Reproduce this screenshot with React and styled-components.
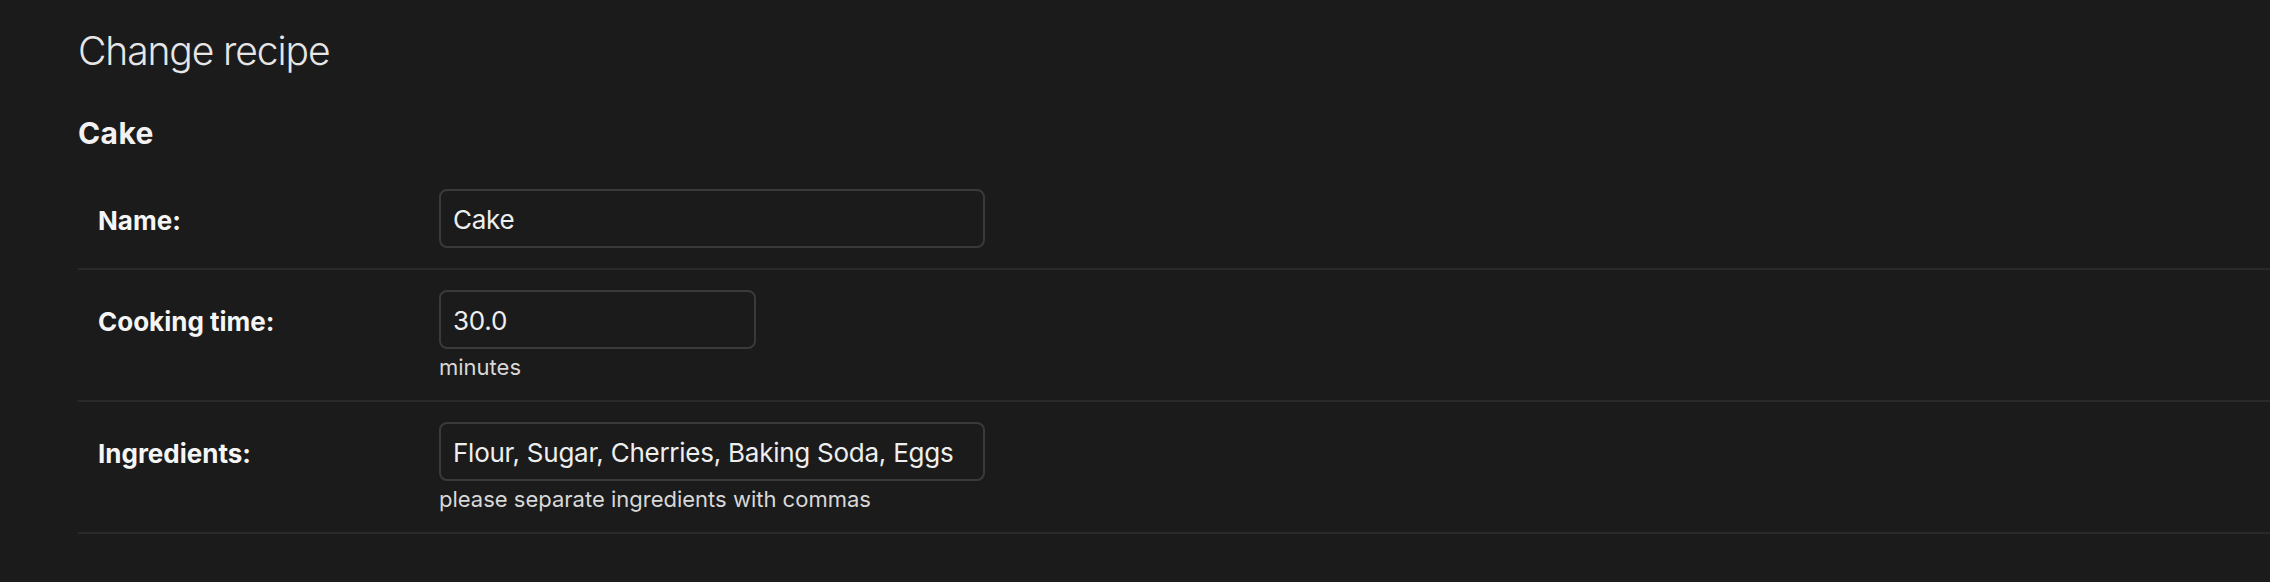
import React, { useState } from 'react';
import styled, { createGlobalStyle } from 'styled-components';

const GlobalStyle = createGlobalStyle`
  html, body {
    margin: 0;
    padding: 0;
    background: #1b1b1b;
  }
  body {
    font-family: Inter, 'Noto Sans', sans-serif;
    color: #eeeeee;
  }
`;

const Content = styled.div`
  padding: 27px 0 40px 78px;
`;

const Title = styled.h1`
  margin: 0;
  font-size: 39px;
  line-height: 48px;
  font-weight: 300;
  letter-spacing: -1.1px;
  color: #e6e6e6;
`;

const Subtitle = styled.h2`
  margin: 41px 0 18px;
  font-size: 30px;
  line-height: 35px;
  font-weight: 700;
  letter-spacing: 0.4px;
  color: #f2f2f2;
`;

const Fieldset = styled.fieldset`
  margin: 0;
  padding: 0;
  border: none;
`;

const Row = styled.div`
  display: flex;
  align-items: flex-start;
  padding: 20px 0 20px 20px;
  border-bottom: 2px solid #2a2a2a;
`;

const Label = styled.label`
  box-sizing: border-box;
  flex: 0 0 341px;
  height: 59px;
  padding-top: 3px;
  display: flex;
  align-items: center;
  font-size: 26px;
  font-weight: 700;
  color: #f5f5f5;
`;

const Field = styled.div`
  display: flex;
  flex-direction: column;
`;

const Input = styled.input`
  box-sizing: border-box;
  width: ${(p) => p.$width}px;
  height: 59px;
  padding: 2px 12px 0;
  border: 2px solid #3a3a3a;
  border-radius: 8px;
  background: #1b1b1b;
  color: #eeeeee;
  font-family: Inter, 'Noto Sans', sans-serif;
  font-size: 26px;
  letter-spacing: -0.25px;

  &:focus {
    outline: none;
    border-color: #5a5a5a;
  }
`;

const Help = styled.div`
  margin-top: 6px;
  font-size: 22px;
  line-height: 25px;
  color: #d8d8d8;
`;

export default function App() {
  const [name, setName] = useState('Cake');
  const [time, setTime] = useState('30.0');
  const [ingredients, setIngredients] = useState('Flour, Sugar, Cherries, Baking Soda, Eggs');

  return (
    <>
      <GlobalStyle />
      <Content>
        <Title>Change recipe</Title>
        <Subtitle>Cake</Subtitle>
        <Fieldset>
          <Row>
            <Label htmlFor="id_name">Name:</Label>
            <Field>
              <Input id="id_name" $width={546} value={name} onChange={(e) => setName(e.target.value)} />
            </Field>
          </Row>
          <Row>
            <Label htmlFor="id_time">Cooking time:</Label>
            <Field>
              <Input id="id_time" $width={317} value={time} onChange={(e) => setTime(e.target.value)} />
              <Help>minutes</Help>
            </Field>
          </Row>
          <Row>
            <Label htmlFor="id_ingredients">Ingredients:</Label>
            <Field>
              <Input
                id="id_ingredients"
                $width={546}
                value={ingredients}
                onChange={(e) => setIngredients(e.target.value)}
              />
              <Help>please separate ingredients with commas</Help>
            </Field>
          </Row>
        </Fieldset>
      </Content>
    </>
  );
}
